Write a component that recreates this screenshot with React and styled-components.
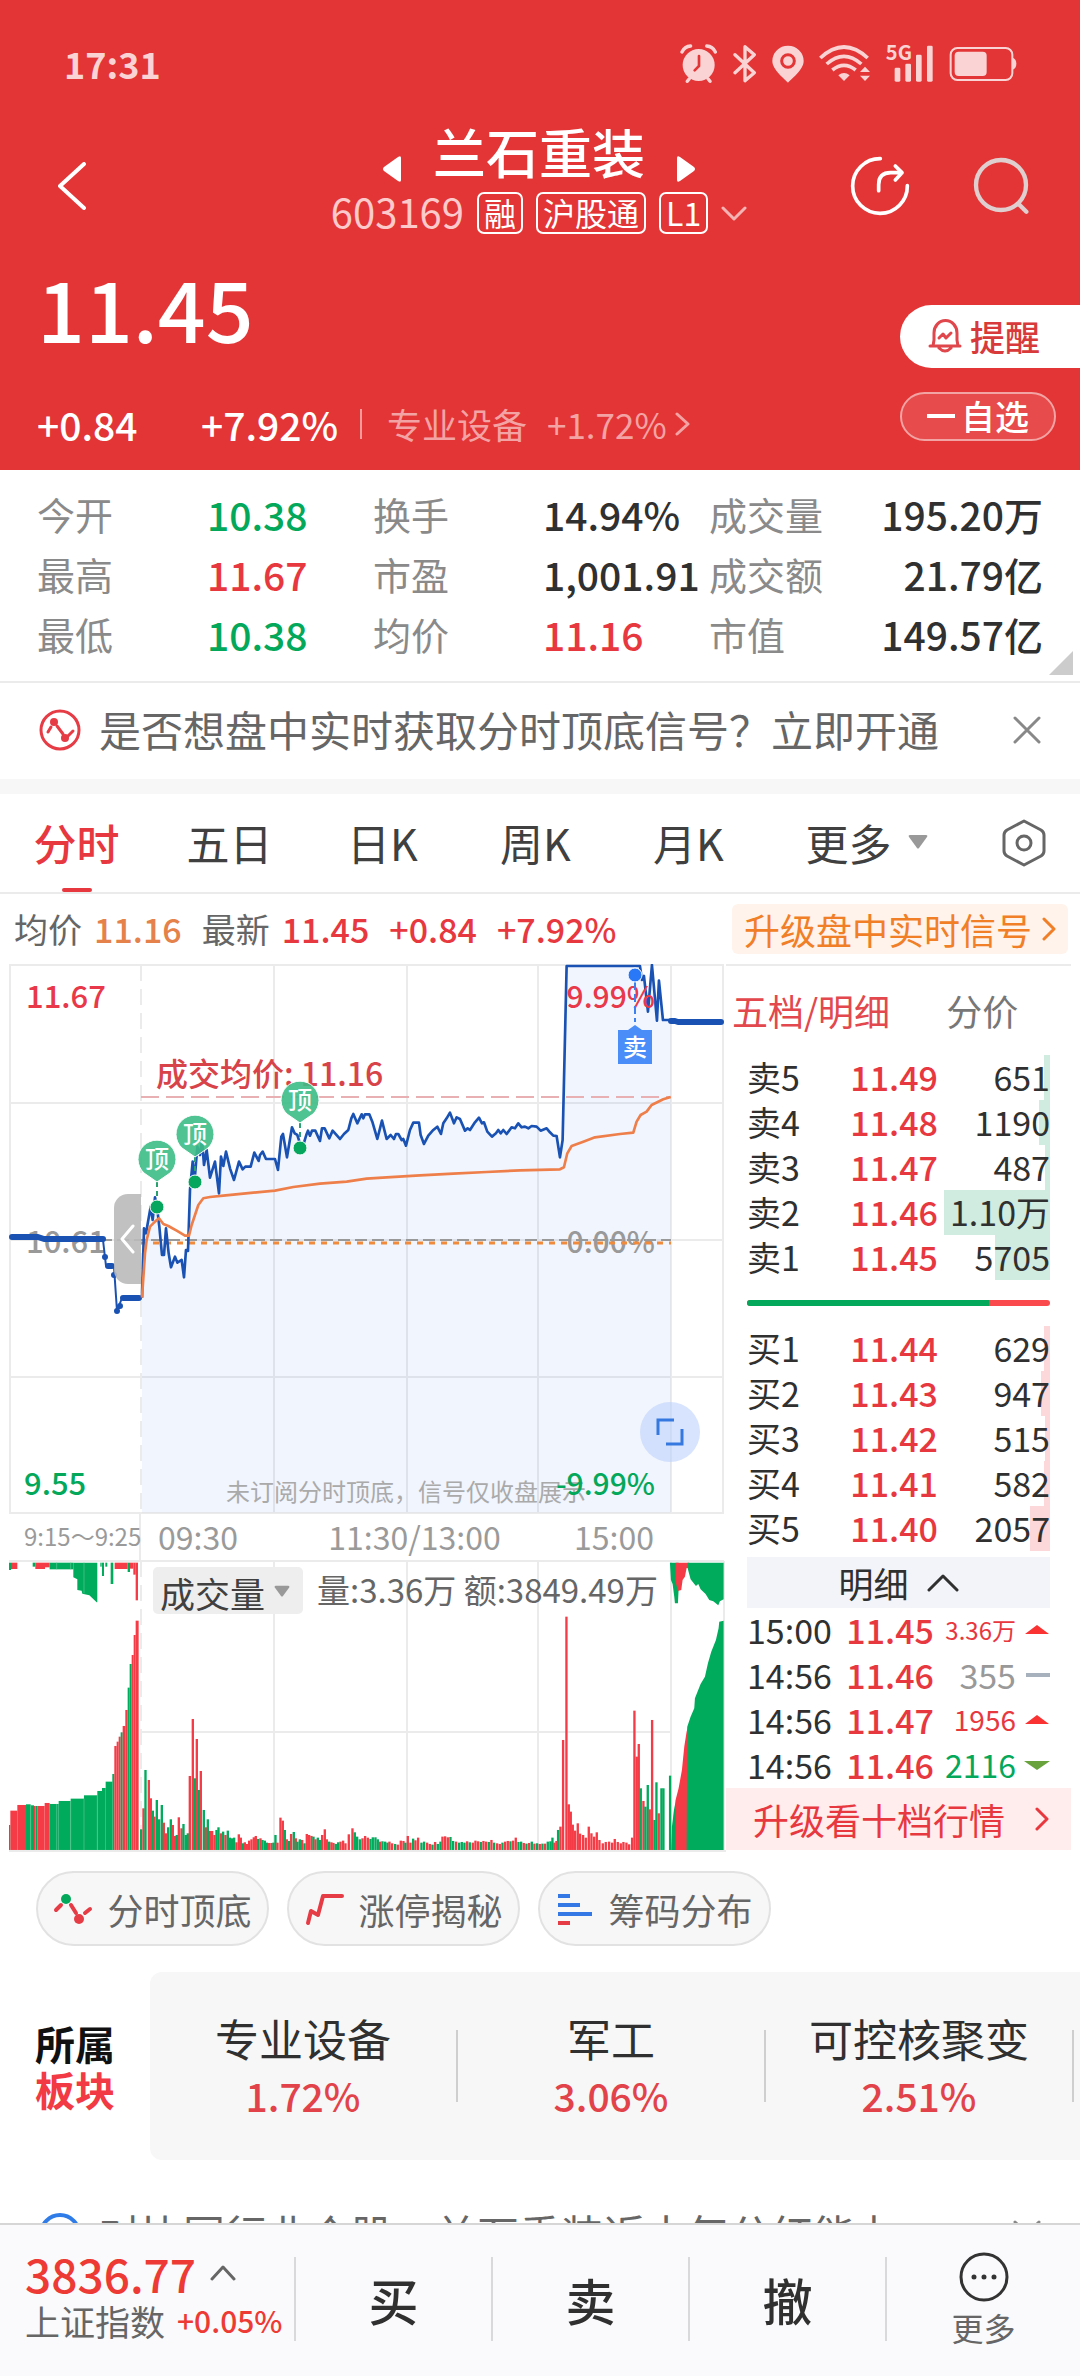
import React from "react";
import styled, { createGlobalStyle } from "styled-components";

const c = {
  brand: "#e33536",
  up: "#e8383f",
  down: "#04a85b",
  ink: "#303030",
  mid: "#666666",
  soft: "#8a8a8a",
  line: "#ebebeb",
  blue: "#1a52b3",
  orange: "#ee7f4a",
};

const tone = {
  up: c.up,
  down: c.down,
  ink: c.ink,
  soft: "#999999",
};

const GlobalStyle = createGlobalStyle`
  * { box-sizing: border-box; }
  body {
    margin: 0;
    background: #ffffff;
    color: ${c.ink};
    font-family: "Noto Sans CJK SC", "Noto Sans", sans-serif;
  }
  button, select { font-family: inherit; }
  svg { display: block; flex: none; }
`;

const Screen = styled.div`
  height: 100vh;
  display: flex;
  flex-direction: column;
`;

const Scroller = styled.main`
  flex: 1;
  min-height: 0;
  overflow-y: auto;
  scrollbar-width: none;
  &::-webkit-scrollbar { display: none; }
`;

const PlainButton = styled.button`
  display: flex;
  align-items: center;
  justify-content: center;
  padding: 0;
  border: 0;
  background: none;
  color: inherit;
  cursor: pointer;
`;

/* ---------- header ---------- */

const Hero = styled.header`
  background: ${c.brand};
  color: #ffffff;
  height: 470px;
  display: flex;
  flex-direction: column;
`;

const StatusBar = styled.div`
  height: 120px;
  padding: 8px 63px 0 64px;
  display: flex;
  align-items: center;
  justify-content: space-between;
  color: #fad4d4;
`;

const Clock = styled.span`
  font-size: 36px;
  line-height: 44px;
  font-weight: 700;
  padding-bottom: 2px;
`;

const StatusIcons = styled.div`
  display: flex;
  align-items: center;
  gap: 15px;
`;

const Signal = styled.div`
  display: flex;
  align-items: flex-start;
`;

const NetLabel = styled.span`
  font-size: 20px;
  line-height: 16px;
  height: 40px;
  font-weight: 700;
  margin-right: -18px;
`;

const NavBar = styled.div`
  display: grid;
  grid-template-columns: 1fr auto 1fr;
  height: 120px;
  padding: 0 48px 0 46px;
`;

const NavBack = styled(PlainButton)`
  justify-self: start;
  align-self: center;
  width: 52px;
  height: 60px;
  margin-top: 12px;
`;

const NavTools = styled.div`
  justify-self: end;
  display: flex;
  align-items: center;
  gap: 62px;
  padding-top: 12px;
`;

const TitleBlock = styled.div`
  display: flex;
  flex-direction: column;
  align-items: center;
`;

const TitleRow = styled.div`
  display: flex;
  align-items: flex-start;
  gap: 32px;
`;

const StockName = styled.h1`
  margin: 0;
  font-size: 53px;
  line-height: 62px;
  font-weight: 500;
`;

const StepButton = styled(PlainButton)`
  height: 98px;
`;

const CodeRow = styled.div`
  display: flex;
  align-items: center;
  gap: 13px;
  margin-top: -26px;
  height: 42px;
`;

const Code = styled.span`
  font-size: 40px;
  line-height: 38px;
  padding-bottom: 4px;
  color: #fccaca;
`;

const Tag = styled.span`
  border: 2px solid #ffffff;
  border-radius: 7px;
  height: 42px;
  padding: 0 5px;
  font-size: 32px;
  line-height: 36px;
  min-width: 45px;
  text-align: center;
`;

const PriceArea = styled.div`
  flex: 1;
  display: grid;
  grid-template-columns: 1fr auto;
`;

const PriceCol = styled.div`
  padding-left: 37px;
`;

const Price = styled.div`
  font-size: 84px;
  line-height: 100px;
  font-weight: 500;
  margin-top: 17px;
`;

const ChangeRow = styled.div`
  display: flex;
  align-items: center;
  margin-top: 40px;
  height: 54px;
`;

const Change = styled.span`
  font-size: 39px;
  line-height: 54px;
  font-weight: 500;
  width: ${(p) => p.$w}px;
`;

const Rule = styled.i`
  width: 2px;
  height: 30px;
  background: #f09a9a;
  margin: 0 25px 0 0;
`;

const IndustryLink = styled.a`
  display: flex;
  align-items: center;
  color: #f3a3a4;
  text-decoration: none;
  font-size: 35px;
  line-height: 54px;
  gap: 20px;
  & svg { margin-left: -12px; }
`;

const SideActions = styled.div`
  width: 180px;
  padding-top: 65px;
  display: flex;
  flex-direction: column;
  align-items: flex-start;
`;

const RemindButton = styled(PlainButton)`
  width: 180px;
  height: 63px;
  background: #ffffff;
  border-radius: 32px 0 0 32px;
  justify-content: flex-start;
  padding: 0 0 2px 28px;
  gap: 8px;
  color: #d83a3c;
  font-size: 35px;
  line-height: 50px;
  font-weight: 500;
`;

const WatchButton = styled(PlainButton)`
  width: 156px;
  height: 49px;
  margin-top: 24px;
  padding-bottom: 2px;
  border: 2px solid #f2a3a3;
  border-radius: 25px;
  background: #e74b4b;
  font-size: 34px;
  line-height: 40px;
  font-weight: 500;
  gap: 6px;
`;

/* ---------- stats ---------- */

const Stats = styled.dl`
  position: relative;
  margin: 0;
  padding: 14px 37px 17px;
  display: grid;
  grid-template-columns: 336fr 336fr 334fr;
  border-bottom: 2px solid ${c.line};
`;

const Stat = styled.div`
  display: flex;
  height: 60px;
  line-height: 60px;
  white-space: nowrap;
`;

const StatName = styled.dt`
  width: 170px;
  flex: none;
  font-size: 38px;
  color: ${c.soft};
`;

const StatValue = styled.dd`
  margin: 0;
  flex: 1;
  min-width: 0;
  font-size: 39px;
  font-weight: 500;
  color: ${(p) => tone[p.$tone]};
  display: ${(p) => (p.$end ? "flex" : "block")};
  justify-content: flex-end;
`;

const Corner = styled.i`
  position: absolute;
  right: 7px;
  bottom: 6px;
  border-left: 24px solid transparent;
  border-bottom: 24px solid #cccccc;
`;

/* ---------- notices ---------- */

const Notice = styled.div`
  height: 96px;
  padding: 0 39px 2px;
  display: flex;
  align-items: center;
  font-size: 42px;
  line-height: 60px;
  color: ${c.mid};
  white-space: nowrap;
`;

const NoticeLink = styled.a`
  flex: 1;
  margin-left: 18px;
  padding-bottom: 2px;
  color: inherit;
  text-decoration: none;
`;

const Band = styled.div`
  height: 15px;
  background: #f7f7f7;
`;

/* ---------- tabs ---------- */

const Tabs = styled.nav`
  display: grid;
  grid-template-columns: repeat(5, 153fr) 203fr 112fr;
  height: 100px;
  border-bottom: 2px solid ${c.line};
`;

const Tab = styled(PlainButton)`
  flex-direction: column;
  justify-content: flex-start;
  font-size: 43px;
  line-height: 64px;
  padding-top: 16px;
  font-weight: ${(p) => (p.$on ? 500 : 400)};
  color: ${(p) => (p.$on ? c.up : "#404040")};
  &::after {
    content: "";
    width: 30px;
    height: 4px;
    border-radius: 2px;
    margin-top: 14px;
    background: ${(p) => (p.$on ? c.up : "transparent")};
  }
`;

const MoreTab = styled(PlainButton)`
  gap: 16px;
  font-size: 43px;
  line-height: 64px;
  padding-bottom: 3px;
  color: #404040;
`;

/* ---------- quote line ---------- */

const QuoteLine = styled.div`
  display: flex;
  align-items: center;
  height: 70px;
  padding: 0 12px 0 14px;
  font-size: 34px;
  line-height: 50px;
  white-space: nowrap;
  color: ${c.mid};
`;

const QuoteItem = styled.span`
  color: ${(p) => p.$color || "inherit"};
  font-weight: ${(p) => (p.$color ? 500 : 400)};
  margin-right: ${(p) => (p.$wide ? 20 : 12)}px;
`;

const Upgrade = styled.a`
  margin-left: auto;
  height: 50px;
  display: flex;
  align-items: center;
  gap: 10px;
  padding: 0 12px;
  border-radius: 6px;
  background: #fff3eb;
  color: #f07f28;
  font-size: 36px;
  text-decoration: none;
`;

/* ---------- market panel ---------- */

const Market = styled.section`
  display: grid;
  grid-template-columns: 726fr 354fr;
  align-items: start;
`;

const ChartCol = styled.div`
  position: relative;
`;

const ChartSvg = styled.svg`
  width: 100%;
  height: auto;
`;

const PinText = styled.text`
  font-size: 24px;
  font-weight: 500;
  fill: #ffffff;
  text-anchor: middle;
`;

const ChartLabel = styled.text`
  font-size: ${(p) => p.$size || 31}px;
  font-weight: ${(p) => p.$weight || 500};
  fill: ${(p) => p.$fill};
  text-anchor: ${(p) => p.$anchor || "start"};
`;

const DrawerHandle = styled(PlainButton)`
  position: absolute;
  left: 114px;
  top: 230px;
  width: 27px;
  height: 90px;
  border-radius: 14px 0 0 14px;
  background: rgba(186, 186, 186, 0.9);
`;

const ExpandButton = styled(PlainButton)`
  position: absolute;
  right: 26px;
  top: 438px;
  width: 60px;
  height: 60px;
  border-radius: 30px;
  background: rgba(190, 210, 252, 0.6);
`;

const TimeAxis = styled.div`
  display: grid;
  grid-template-columns: 117px auto 1fr auto;
  height: 46px;
  padding: 0 72px 0 24px;
  line-height: 44px;
  color: #9a9a9a;
  white-space: nowrap;
`;

const AxisMark = styled.span`
  font-size: ${(p) => (p.$small ? 24 : 32)}px;
  padding-left: ${(p) => (p.$pad ? 17 : 0)}px;
  border-right: ${(p) => (p.$small ? `2px solid ${c.line}` : "0")};
  text-align: ${(p) => (p.$mid ? "center" : "left")};
`;

const VolumePanel = styled.div`
  position: relative;
`;

const VolumeHead = styled.div`
  position: absolute;
  left: 153px;
  top: 7px;
  height: 47px;
  display: flex;
  align-items: center;
  gap: 14px;
  font-size: 33px;
  line-height: 44px;
  color: ${c.mid};
  white-space: nowrap;
`;

const VolumeFigures = styled.span`
  padding-bottom: 3px;
`;

const IndicatorPicker = styled.label`
  position: relative;
  display: flex;
  align-items: center;
  & svg {
    position: absolute;
    right: 13px;
    pointer-events: none;
  }
`;

const IndicatorSelect = styled.select`
  appearance: none;
  border: 0;
  border-radius: 5px;
  background: #eeeeee;
  width: 150px;
  height: 47px;
  padding: 0 0 3px 7px;
  font-size: 35px;
  color: #404040;
`;

/* ---------- order book ---------- */

const Book = styled.aside`
  border-top: 2px solid ${c.line};
  margin-right: 9px;
`;

const BookTabs = styled.div`
  display: flex;
  gap: 56px;
  padding: 17px 0 0 6px;
  height: 89px;
`;

const BookTab = styled(PlainButton)`
  align-items: flex-start;
  font-size: 36px;
  line-height: 54px;
  color: ${(p) => (p.$on ? "#e2484d" : "#777777")};
`;

const BookTable = styled.table`
  border-collapse: collapse;
  table-layout: fixed;
  width: calc(100% - 42px);
  margin-left: 21px;
  font-size: 34px;
  line-height: 43px;
  white-space: nowrap;
  & td, & th { padding: 0 0 2px; height: 45px; }
`;

const Level = styled.th`
  width: 92px;
  padding-left: 2px;
  text-align: left;
  font-weight: 400;
`;

const LevelPrice = styled.td`
  width: 99px;
  text-align: right;
  color: ${c.up};
  font-weight: 500;
`;

const LevelVolume = styled.td`
  text-align: right;
  background: linear-gradient(${(p) => p.$tint}, ${(p) => p.$tint}) right / ${(p) => p.$w}px 100% no-repeat;
`;

const Balance = styled.div`
  display: flex;
  height: 6px;
  margin: 20px 21px;
  border-radius: 3px;
  overflow: hidden;
  background: #fb4a4d;
  &::before {
    content: "";
    width: 80%;
    background: ${c.down};
  }
`;

const DetailToggle = styled(PlainButton)`
  width: calc(100% - 42px);
  height: 51px;
  margin: 6px 21px 0;
  gap: 18px;
  background: #f2f4f9;
  font-size: 35px;
  line-height: 50px;
`;

const Tape = styled(BookTable)`
  & td:last-child { width: 34px; }
`;

const TapeTime = styled.th`
  width: 86px;
  text-align: left;
  font-weight: 400;
`;

const TapePrice = styled.td`
  width: 101px;
  text-align: right;
  color: ${c.up};
  font-weight: 500;
`;

const TapeVolume = styled.td`
  text-align: right;
  font-size: ${(p) => p.$size}px;
  color: ${(p) => tone[p.$tone]};
`;

const TapeIcon = styled.td`
  & svg { margin-left: auto; }
`;

const TenLevels = styled.a`
  display: flex;
  align-items: center;
  justify-content: space-between;
  height: 62px;
  padding: 0 22px 0 27px;
  background: #ffeced;
  color: ${c.up};
  font-size: 36px;
  text-decoration: none;
`;

/* ---------- chips ---------- */

const Chips = styled.div`
  display: flex;
  gap: 18px;
  padding: 19px 36px 26px;
`;

const Chip = styled(PlainButton)`
  width: 233px;
  height: 75px;
  border: 2px solid #e2e2e2;
  border-radius: 38px;
  background: #f7f7f7;
  color: ${c.mid};
  font-size: 36px;
  gap: 14px;
`;

/* ---------- sectors ---------- */

const Sectors = styled.section`
  display: grid;
  grid-template-columns: 150px 1fr;
  height: 188px;
`;

const SectorTitle = styled.h2`
  margin: 0;
  padding-left: 35px;
  align-self: center;
  font-size: 40px;
  line-height: 46px;
  font-weight: 700;
  color: #111111;
  & span { display: block; }
  & span + span { color: #f23a44; }
`;

const SectorStrip = styled.div`
  display: flex;
  align-items: center;
  overflow: hidden;
  border-radius: 12px 0 0 12px;
  background: #f7f7f7;
`;

const Sector = styled.a`
  flex: none;
  width: 308px;
  height: 72px;
  display: flex;
  flex-direction: column;
  align-items: center;
  justify-content: center;
  border-right: 2px solid #cfcfcf;
  color: ${c.ink};
  text-decoration: none;
  font-size: 44px;
  line-height: 58px;
`;

const SectorPct = styled.span`
  font-size: 39px;
  line-height: 56px;
  font-weight: 500;
  color: #e2434a;
`;

const NextNotice = styled.div`
  margin-top: 27px;
`;

/* ---------- footer ---------- */

const Footer = styled.footer`
  display: grid;
  grid-template-columns: 294fr 197fr 197fr 197fr 195fr;
  height: 153px;
  background: #fafafc;
  border-top: 2px solid #d6d6d6;
`;

const IndexCell = styled.div`
  padding: 22px 0 0 25px;
  white-space: nowrap;
`;

const IndexTop = styled.div`
  display: flex;
  align-items: center;
  gap: 14px;
  height: 52px;
  font-size: 46px;
  font-weight: 500;
  color: #ee3a34;
`;

const IndexBottom = styled.div`
  display: flex;
  align-items: center;
  gap: 12px;
  height: 42px;
  font-size: 35px;
  color: ${c.mid};
`;

const IndexPct = styled.span`
  font-size: 30px;
  font-weight: 500;
  color: #ee3a34;
`;

const Trade = styled(PlainButton)`
  height: 84px;
  margin-top: 32px;
  border-left: 2px solid #d9d9dc;
  font-size: 50px;
  font-weight: 500;
  color: ${c.ink};
`;

const FooterMore = styled(Trade)`
  flex-direction: column;
  gap: 4px;
  font-size: 32px;
  line-height: 40px;
  font-weight: 400;
  color: ${c.mid};
`;

/* ---------- icons ---------- */

const Chevron = ({ dir, w, h, color = "currentColor", sw = 3 }) => {
  const d = {
    left: `M${w - 2} 2L2 ${h / 2}L${w - 2} ${h - 2}`,
    right: `M2 2L${w - 2} ${h / 2}L2 ${h - 2}`,
    down: `M2 2L${w / 2} ${h - 2}L${w - 2} 2`,
    up: `M2 ${h - 2}L${w / 2} 2L${w - 2} ${h - 2}`,
  }[dir];
  return (
    <svg width={w} height={h} fill="none" stroke={color} strokeWidth={sw} strokeLinecap="round" strokeLinejoin="round" aria-hidden="true">
      <path d={d} />
    </svg>
  );
};

const Caret = ({ w = 20, h = 15, color = "#999999" }) => (
  <svg width={w} height={h} viewBox="0 0 20 15" aria-hidden="true">
    <path d="M2 1h16q2 0 1 2l-8 11q-1 1-2 0L1 3q-1-2 1-2z" fill={color} />
  </svg>
);

const AlarmIcon = () => (
  <svg width="38" height="40" viewBox="356 76 114 120" fill="#fad4d4">
    <circle cx="412" cy="139" r="48" />
    <path d="M362 100a30 30 0 0 1 26-18M462 100a30 30 0 0 0-26-18M384 180l-6 8M440 180l6 8" fill="none" stroke="#fad4d4" strokeWidth="10" strokeLinecap="round" />
    <path d="M413 112v30l-13 13" fill="none" stroke={c.brand} strokeWidth="8" strokeLinecap="round" />
  </svg>
);

const BluetoothIcon = () => (
  <svg width="24" height="40" viewBox="518 76 72 120" fill="none" stroke="#fad4d4" strokeWidth="10" strokeLinejoin="round" strokeLinecap="round">
    <path d="M524 108l58 54-28 24V84l28 24-58 54" />
  </svg>
);

const PinIcon = () => (
  <svg width="32" height="40" viewBox="636 76 96 120" fill="#fad4d4">
    <path d="M684 192c-8-10-47-38-47-65a47 46 0 0 1 94 0c0 27-39 55-47 65z" />
    <circle cx="684" cy="127" r="19" fill="none" stroke={c.brand} strokeWidth="9" />
  </svg>
);

const WifiIcon = () => (
  <svg width="52" height="40" viewBox="780 76 156 120" fill="none" stroke="#fad4d4" strokeWidth="11">
    <path d="M784 118q71-66 142 0M803 136q52-46 104 0M820 154q35-28 70 0" />
    <path d="M838 170q17-14 34 0l-17 17zM903 160l15-16 15 16zM903 171l15 16 15-16z" fill="#fad4d4" stroke="none" />
  </svg>
);

const BarsIcon = () => (
  <svg width="40" height="40" viewBox="1002 76 120 120" fill="#fad4d4">
    <rect x="1004" y="147" width="17" height="42" rx="4" />
    <rect x="1036" y="135" width="17" height="54" rx="4" />
    <rect x="1068" y="108" width="17" height="81" rx="4" />
    <rect x="1101" y="81" width="17" height="108" rx="4" />
  </svg>
);

const BatteryIcon = () => (
  <svg width="68" height="40" viewBox="1168 78 204 120">
    <rect x="1173" y="90" width="185" height="96" rx="20" fill="none" stroke="#fad4d4" strokeWidth="6" />
    <rect x="1185" y="101" width="96" height="73" rx="12" fill="#fad4d4" />
    <path d="M1358 119q12 3 12 18t-12 18z" fill="#fad4d4" />
  </svg>
);

const ShareIcon = () => (
  <svg width="60" height="60" viewBox="873 408 180 180" fill="none" stroke="#ffffff" strokeWidth="11" strokeLinecap="round" strokeLinejoin="round">
    <path d="M964 416a82 82 0 1 0 81 81M959 512v-18q0-36 36-36h34M1009 438l20 20-20 22" />
  </svg>
);

const SearchIcon = () => (
  <svg width="60" height="60" viewBox="1242 408 180 180" fill="none" stroke="#e0cfcf" strokeWidth="13" strokeLinecap="round">
    <circle cx="1329" cy="495" r="75" />
    <path d="M1381 551l24 24" />
  </svg>
);

const StepIcon = ({ flip }) => (
  <svg width="18" height="26" viewBox="0 0 18 26" fill="#ffffff">
    <path d={flip ? "M0 2q0-3 3-1l14 10q2 2 0 4L3 25q-3 2-3-1z" : "M18 2q0-3-3-1L1 11q-2 2 0 4l14 10q3 2 3-1z"} />
  </svg>
);

const BellIcon = () => (
  <svg width="34" height="36" viewBox="0 0 34 36" fill="none" stroke="#e0474c" strokeWidth="3" strokeLinejoin="round" strokeLinecap="round">
    <path d="M2 28h30M5 28l1-6v-7a11 12 0 0 1 23 0v7l1 6M11 30q6 6 12 0" />
    <path d="M11 20l4-4 3 4 5-5" />
  </svg>
);

const WaveIcon = () => (
  <svg width="42" height="44" viewBox="0 0 42 44" fill="none" stroke="#e63c46" strokeLinecap="round">
    <circle cx="21" cy="22" r="19" strokeWidth="3" />
    <path d="M9 24l3-5M18 18l6 8M29 28l5-5" strokeWidth="3" />
    <circle cx="15" cy="14" r="4" fill="#e63c46" stroke="none" />
    <circle cx="26" cy="30" r="4" fill="#e63c46" stroke="none" />
  </svg>
);

const CloseIcon = () => (
  <svg width="28" height="28" viewBox="0 0 28 28" stroke="#888888" strokeWidth="3" strokeLinecap="round">
    <path d="M2 2l24 24M26 2L2 26" />
  </svg>
);

const HexIcon = () => (
  <svg width="44" height="48" viewBox="0 0 44 48" fill="none" stroke="#666666" strokeWidth="3" strokeLinejoin="round">
    <path d="M22 2l17 9q3 2 3 5v16q0 3-3 5l-17 9-17-9q-3-2-3-5V16q0-3 3-5z" />
    <circle cx="22" cy="24" r="7" />
  </svg>
);

const TopBottomIcon = () => (
  <svg width="40" height="34" viewBox="0 0 40 34" fill="none" stroke="#e63c46" strokeWidth="4" strokeLinecap="round">
    <path d="M3 18l5-5M18 13l5 8M32 21l5-4" />
    <circle cx="13" cy="7" r="5" fill={c.down} stroke="none" />
    <circle cx="26" cy="27" r="5" fill="#e63c46" stroke="none" />
  </svg>
);

const LimitIcon = () => (
  <svg width="40" height="34" viewBox="0 0 40 34" fill="none" stroke="#e63c46" strokeWidth="4" strokeLinecap="round" strokeLinejoin="round">
    <path d="M4 31l3-12 7 4 5-19h19" />
  </svg>
);

const ChipsIcon = () => (
  <svg width="38" height="34" viewBox="0 0 38 34" strokeWidth="4">
    <path d="M2 4h12M2 13h22M2 22h34" stroke="#3478e5" />
    <path d="M2 31h12" stroke="#e63c46" />
  </svg>
);

const TapeMark = ({ kind }) => (
  <svg width="26" height="12" viewBox="0 0 26 12" aria-hidden="true">
    {kind === "up" && <path d="M13 1l12 9H1z" fill="#fb3232" />}
    {kind === "down" && <path d="M13 11L0 2h26z" fill="#68a33c" />}
    {kind === "flat" && <path d="M2 4h24v4H2z" fill="#a7b1bd" />}
  </svg>
);

const MoreIcon = () => (
  <svg width="52" height="52" viewBox="0 0 52 52">
    <circle cx="26" cy="26" r="23" fill="none" stroke="#333333" strokeWidth="3" />
    <path d="M16 26h0M26 26h0M36 26h0" stroke="#333333" strokeWidth="5" strokeLinecap="round" />
  </svg>
);

/* ---------- chart data ---------- */

// Session traces are recorded on a 3x grid; the group transform maps them to the plot.
const pricePoints =
  "66,1013 72,805 78,820 92,740 98,780 105,712 111,741 118,800 126,885 132,885 138,805 146,880 153,922 165,890 172,908 185,900 192,952 198,870 204,873 210,690 218,605 224,660 232,560 240,585 246,540 252,615 260,570 270,653 285,605 297,700 303,590 310,618 318,575 330,625 342,660 357,605 368,628 376,620 392,620 403,578 416,603 420,585 428,575 438,597 465,597 474,630 484,530 489,522 501,592 516,502 524,520 532,525 540,550 550,555 560,522 564,512 570,527 576,512 586,512 600,543 606,505 614,505 628,535 638,512 660,537 672,522 685,510 694,475 700,462 712,490 725,463 730,475 735,463 748,463 757,485 772,537 786,482 800,537 812,525 822,537 828,522 835,522 845,540 850,537 858,557 870,510 880,488 897,488 902,525 912,552 925,527 940,510 952,500 963,522 970,490 980,475 990,458 1002,490 1010,472 1020,477 1035,512 1043,505 1050,510 1065,487 1077,473 1086,490 1092,487 1102,515 1116,530 1128,520 1135,510 1142,520 1150,510 1160,522 1175,502 1185,505 1195,490 1205,502 1215,500 1225,505 1235,498 1250,500 1262,512 1280,505 1290,517 1300,527 1310,528 1320,592 1328,540 1340,18 1560,18 1566,60 1572,48 1584,155 1596,15 1611,182 1617,62 1629,180 1652,180";

const averagePoints =
  "66,1013 75,880 80,840 90,800 105,785 117,775 130,792 145,798 170,812 195,827 207,827 215,795 225,765 235,735 250,715 270,711 310,707 400,698 465,692 520,681 600,671 680,665 740,656 800,652 900,646 1000,641 1100,636 1200,631 1320,628 1332,622 1342,580 1355,558 1390,545 1425,532 1500,522 1540,518 1550,485 1562,465 1580,455 1595,435 1630,418 1652,411";

const pins = [
  { x: 157, y: 1159, dot: 1207 },
  { x: 195, y: 1134, dot: 1182 },
  { x: 300, y: 1100, dot: 1148 },
];

const morningBars =
  "424:868g 431:805r 437:690g 447:720r 453:775r 459:812g 464:830r 471:780g 478:838g 486:795g 492:848r 498:880r 505:862g 513:838g 519:855r 525:888r 531:885g 537:832r 545:865r 551:852g 558:885g 564:880g 570:708r 579:537r 585:715g 591:597r 597:750g 603:693r 612:810g 618:862r 624:838g 631:873r 637:873r 644:885r 650:870g 656:862g 663:880r 670:875g 677:885r 684:872g 690:893g 697:895g 703:893g 710:907r 717:883r 723:893r 729:910g 735:907r 741:912r 748:902r 755:898r 762:892r 768:888r 775:897g 782:895r 788:900g 795:902g 801:908g 808:909r 815:909r 821:908g 827:885g 833:908r 842:833r 849:842r 855:870g 861:898r 868:903g 874:882r 882:876g 888:895r 893:905g 900:898g 907:900r 914:910g 921:882r 928:885r 935:888r 941:890g 947:898r 954:893g 960:900g 967:885r 975:868r 981:898r 988:905g 995:907r 1001:909r 1008:912g 1015:907g 1022:905r 1030:902r 1037:910r 1047:883r 1058:865r 1065:877g 1072:890g";

const afternoonBars =
  "1080:898g 1088:895r 1096:888r 1104:893r 1112:897g 1119:892g 1127:892g 1134:898g 1141:905r 1148:904g 1156:905g 1163:908g 1169:905r 1177:910r 1186:912g 1194:914r 1203:902r 1211:903r 1217:908g 1224:888r 1232:908r 1240:896g 1247:901r 1255:893r 1265:908g 1273:905g 1282:908r 1290:912r 1298:914g 1306:906r 1314:912g 1322:905g 1328:890r 1336:889r 1344:892r 1352:891g 1360:903g 1369:905r 1378:908g 1386:906g 1394:908g 1402:904r 1410:907g 1419:908r 1427:902r 1435:904r 1443:906g 1451:903r 1459:905r 1467:906g 1475:900r 1483:908g 1492:910r 1500:912r 1508:908g 1516:905r 1524:903r 1532:904g 1540:902r 1548:893r 1556:906g 1564:905g 1572:909r 1580:911g 1588:909r 1596:905g 1604:911r 1612:910g 1620:912r 1628:911g 1636:911r 1644:905g 1652:904g 1658:893g 1664:908r 1670:903r 1675:870g 1682:860r 1690:600r 1700:230r 1707:793r 1713:815r 1719:854r 1726:872r 1734:850r 1741:881r 1750:885r 1758:893r 1767:860r 1775:880r 1783:890r 1791:877r 1799:900r 1809:910r 1818:906r 1828:905r 1837:908r 1845:897r 1854:906r 1863:910r 1871:906r 1880:908r 1888:913r 1897:893r 1904:512r 1911:650r 1917:612r 1923:745g 1931:783r 1937:800g 1944:735g 1950:808r 1957:540r 1964:840g 1970:727g 1977:820r 1985:745g 1991:745g 2011:707g";

const parseBars = (src) =>
  src.split(" ").map((s) => {
    const [x, rest] = s.split(":");
    return { x: +x, y: parseInt(rest, 10), fill: rest.endsWith("r") ? "#f53c46" : "#00ab5c" };
  });

// Call-auction columns: [left, right, top, colour]
const auction = [
  [27, 31, 855, "g"], [31, 52, 812, "r"], [52, 78, 795, "r"], [78, 92, 793, "g"], [92, 102, 796, "g"],
  [102, 106, 798, "r"], [106, 112, 798, "g"], [112, 134, 798, "r"], [134, 149, 789, "r"], [149, 176, 792, "g"], [176, 212, 783, "g"],
  [212, 252, 776, "g"], [252, 292, 766, "g"], [292, 306, 753, "g"], [306, 317, 744, "g"],
  [317, 337, 725, "g"], [337, 343, 702, "g"], [343, 350, 618, "r"], [350, 356, 605, "r"],
  [356, 362, 590, "r"], [362, 368, 577, "g"], [368, 376, 558, "r"], [376, 383, 510, "r"],
  [383, 389, 443, "g"], [389, 395, 372, "g"], [395, 401, 345, "r"], [401, 407, 285, "r"], [407, 416, 242, "r"],
];

const hanging = [
  [27, 33, 90, "g"], [33, 52, 87, "r"], [98, 106, 80, "g"], [106, 135, 87, "r"], [135, 149, 82, "r"], [149, 220, 88, "g"],
  [301, 305, 80, "g"], [306, 312, 108, "g"], [316, 322, 80, "g"], [332, 340, 132, "g"], [344, 383, 87, "r"],
  [383, 390, 96, "g"], [390, 400, 86, "r"], [400, 407, 104, "r"], [407, 414, 181, "r"],
];

const colour = { r: "#f53c46", g: "#00ab5c" };

function PriceChart() {
  return (
    <ChartSvg viewBox="0 964 726 550" role="img" aria-label="分时走势">
      <g stroke={c.line} strokeWidth="2" fill="none">
        <path d="M9 965H724M9 1103H724M9 1240H724M9 1377H724M9 1513H724M10 965V1513M274 965V1513M407 965V1513M538 965V1513M671 965V1513M723 965V1513" />
        <path d="M141 965V1513" strokeDasharray="16 8" />
      </g>
      <g transform="translate(120 960) scale(0.3333)">
        <polygon points={`${pricePoints} 1652,1658 66,1658`} fill="#4a80f0" fillOpacity="0.08" />
      </g>
      <ChartLabel x="26" y="1008" $fill="#e8384a">11.67</ChartLabel>
      <ChartLabel x="26" y="1253" $fill="#999999">10.61</ChartLabel>
      <ChartLabel x="24" y="1495" $fill={c.down}>9.55</ChartLabel>
      <ChartLabel x="655" y="1253" $size="30" $fill="#999999" $anchor="end">0.00%</ChartLabel>
      <ChartLabel x="156" y="1086" $size="32" $fill="#d8434a">成交均价: 11.16</ChartLabel>
      <path d="M141 1097H671" stroke="#e9b0b4" strokeWidth="2" strokeDasharray="18 7" />
      <path d="M100 1240H671" stroke="#999999" strokeWidth="2" strokeDasharray="12 5" />
      <path d="M141 1243H671" stroke="#f08a3c" strokeWidth="3" strokeDasharray="6 6" />
      <g fill="none" stroke={c.blue} strokeLinejoin="round">
        <path d="M12 1237H38L44 1239H103" strokeWidth="6" strokeLinecap="round" />
        <path d="M103 1240L106 1266L114 1267L117 1311L122 1298" strokeWidth="2" />
        <path d="M105 1257h0M108 1266h4M114 1275h0M117 1311h0M120 1306h0M123 1298h16" strokeWidth="6" strokeLinecap="round" />
        <path d="M671 1021h4l3 1H721" strokeWidth="6" strokeLinecap="round" />
      </g>
      <g transform="translate(120 960) scale(0.3333)" fill="none" strokeLinejoin="round">
        <polyline points={pricePoints} stroke={c.blue} strokeWidth="8" />
        <polyline points={averagePoints} stroke={c.orange} strokeWidth="8" />
      </g>
      <ChartLabel x="655" y="1008" $size="30" $fill="#e8384a" $anchor="end">9.99%</ChartLabel>
      <ChartLabel x="586" y="1501" $size="24" $weight="400" $fill="#aaaaaa" $anchor="end">未订阅分时顶底，信号仅收盘展示</ChartLabel>
      <ChartLabel x="655" y="1495" $size="30" $fill={c.down} $anchor="end">-9.99%</ChartLabel>
      {pins.map((p) => (
        <g key={p.x}>
          <path d={`M${p.x} ${p.y + 23}V${p.dot}`} stroke="#2aa06f" strokeWidth="2" strokeDasharray="5 4" />
          <path
            d={`M${p.x} ${p.y + 23}L${p.x - 13} ${p.y + 14}A19 19 0 1 1 ${p.x + 13} ${p.y + 14}Z`}
            fill="#3dbd86" fillOpacity="0.9" stroke="#ffffff" strokeWidth="1"
          />
          <PinText x={p.x} y={p.y + 9}>顶</PinText>
          <circle cx={p.x} cy={p.dot} r="7" fill="#06a65f" stroke="#ffffff" strokeWidth="1" />
        </g>
      ))}
      <path d="M635 982V1022" stroke="#3c80f0" strokeWidth="2" strokeDasharray="8 4" />
      <circle cx="635" cy="975" r="7" fill="#2878f8" stroke="#ffffff" strokeWidth="1" />
      <path d="M618 1030h10l7-5 7 5h10v34h-34z" fill="#4a8cf8" />
      <PinText x="635" y="1056">卖</PinText>
    </ChartSvg>
  );
}

function VolumeChart() {
  return (
    <ChartSvg viewBox="0 1560 726 292" role="img" aria-label="成交量柱状图">
      <g stroke={c.line} strokeWidth="2" fill="none">
        <path d="M9 1561H724M141 1732H671M9 1851H726M274 1561V1850M407 1561V1850M538 1561V1850M671 1561V1850M724 1561V1850" />
        <path d="M141 1561V1850" strokeDasharray="16 8" />
      </g>
      <g transform="translate(0 1540) scale(0.3333)">
        {auction.map(([l, r, top, k]) => (
          <rect key={l} x={l} y={top} width={r - l} height={930 - top} fill={colour[k]} />
        ))}
        {hanging.map(([l, r, end, k]) => (
          <rect key={l} x={l} y="68" width={r - l} height={end - 68} fill={colour[k]} />
        ))}
        <polygon points="220,68 220,112 232,118 232,150 245,152 247,161 268,166 290,187 292,187 292,68" fill={colour.g} />
        <path d="M92 796V930M170 792V930M212 783V930M252 776V930M292 766V930M170 68V88M212 68V88M252 68V160" stroke="#5fc795" strokeWidth="2" />
        {[...parseBars(morningBars), ...parseBars(afternoonBars)].map((b) => (
          <rect key={b.x} x={b.x - 4} y={b.y} width="7" height={930 - b.y} fill={b.fill} />
        ))}
        <polygon points="2014,930 2016,860 2022,810 2030,770 2034,930" fill={colour.g} />
        <polygon points="2027,930 2027,780 2036,745 2046,690 2053,620 2060,575 2064,560 2064,930" fill={colour.r} />
        <polygon points="2060,930 2062,560 2072,530 2083,505 2085,475 2102,432 2115,410 2124,370 2134,335 2148,300 2156,265 2158,245 2171,242 2171,930" fill={colour.g} />
        <polygon points="2010,68 2013,120 2018,132 2023,170 2025,190 2034,190 2036,150 2036,68" fill={colour.g} />
        <polygon points="2027,68 2027,125 2034,153 2044,150 2048,120 2055,110 2060,84 2068,84 2068,68" fill={colour.r} />
        <polygon points="2063,68 2063,84 2072,118 2088,138 2095,132 2102,148 2117,162 2128,180 2140,184 2155,196 2160,184 2171,178 2171,68" fill={colour.g} />
      </g>
    </ChartSvg>
  );
}

const stats = [
  ["今开", "10.38", "down"], ["换手", "14.94%", "ink"], ["成交量", "195.20万", "ink"],
  ["最高", "11.67", "up"], ["市盈", "1,001.91", "ink"], ["成交额", "21.79亿", "ink"],
  ["最低", "10.38", "down"], ["均价", "11.16", "up"], ["市值", "149.57亿", "ink"],
];

const asks = [
  ["卖5", "11.49", "651", 6], ["卖4", "11.48", "1190", 11], ["卖3", "11.47", "487", 5],
  ["卖2", "11.46", "1.10万", 106], ["卖1", "11.45", "5705", 55],
];

const bids = [
  ["买1", "11.44", "629", 6], ["买2", "11.43", "947", 9], ["买3", "11.42", "515", 5],
  ["买4", "11.41", "582", 6], ["买5", "11.40", "2057", 20],
];

const ticks = [
  ["15:00", "11.45", "3.36万", "up", "up", 24],
  ["14:56", "11.46", "355", "soft", "flat", 34],
  ["14:56", "11.47", "1956", "up", "up", 28],
  ["14:56", "11.46", "2116", "down", "down", 32],
];

const Levels = ({ rows, tint }) => (
  <BookTable>
    <tbody>
      {rows.map(([name, price, vol, w]) => (
        <tr key={name}>
          <Level scope="row">{name}</Level>
          <LevelPrice>{price}</LevelPrice>
          <LevelVolume $tint={tint} $w={w}>{vol}</LevelVolume>
        </tr>
      ))}
    </tbody>
  </BookTable>
);

export default function App() {
  return (
    <Screen>
      <GlobalStyle />
      <Scroller>
        <Hero>
          <StatusBar>
            <Clock>17:31</Clock>
            <StatusIcons>
              <AlarmIcon />
              <BluetoothIcon />
              <PinIcon />
              <WifiIcon />
              <Signal>
                <NetLabel>5G</NetLabel>
                <BarsIcon />
              </Signal>
              <BatteryIcon />
            </StatusIcons>
          </StatusBar>
          <NavBar>
            <NavBack aria-label="返回"><Chevron dir="left" w={28} h={48} sw={4} /></NavBack>
            <TitleBlock>
              <TitleRow>
                <StepButton aria-label="上一只"><StepIcon /></StepButton>
                <StockName>兰石重装</StockName>
                <StepButton aria-label="下一只"><StepIcon flip /></StepButton>
              </TitleRow>
              <CodeRow>
                <Code>603169</Code>
                <Tag>融</Tag>
                <Tag>沪股通</Tag>
                <Tag>L1</Tag>
                <Chevron dir="down" w={26} h={15} color="#f5b3b3" />
              </CodeRow>
            </TitleBlock>
            <NavTools>
              <PlainButton aria-label="分享"><ShareIcon /></PlainButton>
              <PlainButton aria-label="搜索"><SearchIcon /></PlainButton>
            </NavTools>
          </NavBar>
          <PriceArea>
            <PriceCol>
              <Price>11.45</Price>
              <ChangeRow>
                <Change $w={164}>+0.84</Change>
                <Change $w={159}>+7.92%</Change>
                <Rule />
                <IndustryLink href="#industry">
                  <span>专业设备</span>
                  <span>+1.72%</span>
                  <Chevron dir="right" w={15} h={24} />
                </IndustryLink>
              </ChangeRow>
            </PriceCol>
            <SideActions>
              <RemindButton><BellIcon />提醒</RemindButton>
              <WatchButton>
                <svg width="28" height="4"><path d="M0 2h28" stroke="#ffffff" strokeWidth="4" /></svg>
                自选
              </WatchButton>
            </SideActions>
          </PriceArea>
        </Hero>

        <Stats>
          {stats.map(([name, value, t], i) => (
            <Stat key={name}>
              <StatName>{name}</StatName>
              <StatValue $tone={t} $end={i % 3 === 2}>{value}</StatValue>
            </Stat>
          ))}
          <Corner />
        </Stats>

        <Notice>
          <WaveIcon />
          <NoticeLink href="#signal">是否想盘中实时获取分时顶底信号？立即开通</NoticeLink>
          <PlainButton aria-label="关闭"><CloseIcon /></PlainButton>
        </Notice>
        <Band />

        <Tabs>
          {["分时", "五日", "日K", "周K", "月K"].map((t, i) => (
            <Tab key={t} $on={i === 0}>{t}</Tab>
          ))}
          <MoreTab>更多<Caret /></MoreTab>
          <PlainButton aria-label="设置"><HexIcon /></PlainButton>
        </Tabs>

        <QuoteLine>
          <QuoteItem>均价</QuoteItem>
          <QuoteItem $color="#e5814a" $wide>11.16</QuoteItem>
          <QuoteItem>最新</QuoteItem>
          <QuoteItem $color={c.up} $wide>11.45</QuoteItem>
          <QuoteItem $color={c.up} $wide>+0.84</QuoteItem>
          <QuoteItem $color={c.up}>+7.92%</QuoteItem>
          <Upgrade href="#upgrade">升级盘中实时信号<Chevron dir="right" w={14} h={24} /></Upgrade>
        </QuoteLine>

        <Market>
          <ChartCol>
            <PriceChart />
            <DrawerHandle aria-label="收起集合竞价"><Chevron dir="left" w={15} h={30} color="#ffffff" /></DrawerHandle>
            <ExpandButton aria-label="全屏">
              <svg width="28" height="28" fill="none" stroke="#3478e0" strokeWidth="3"><path d="M2 17V2h16M26 11v15H10" /></svg>
            </ExpandButton>
            <TimeAxis>
              <AxisMark $small>9:15～9:25</AxisMark>
              <AxisMark $pad>09:30</AxisMark>
              <AxisMark $pad $mid>11:30/13:00</AxisMark>
              <AxisMark>15:00</AxisMark>
            </TimeAxis>
            <VolumePanel>
              <VolumeChart />
              <VolumeHead>
                <IndicatorPicker aria-label="指标">
                  <IndicatorSelect defaultValue="vol">
                    <option value="vol">成交量</option>
                  </IndicatorSelect>
                  <Caret w={16} h={12} />
                </IndicatorPicker>
                <VolumeFigures>量:3.36万 额:3849.49万</VolumeFigures>
              </VolumeHead>
            </VolumePanel>
          </ChartCol>

          <Book>
            <BookTabs>
              <BookTab $on>五档/明细</BookTab>
              <BookTab>分价</BookTab>
            </BookTabs>
            <Levels rows={asks} tint="#d0ebdf" />
            <Balance />
            <Levels rows={bids} tint="#fdd8da" />
            <DetailToggle>明细<Chevron dir="up" w={32} h={18} /></DetailToggle>
            <Tape>
              <tbody>
                {ticks.map(([time, price, vol, t, mark, size], i) => (
                  <tr key={i}>
                    <TapeTime scope="row">{time}</TapeTime>
                    <TapePrice>{price}</TapePrice>
                    <TapeVolume $tone={t} $size={size}>{vol}</TapeVolume>
                    <TapeIcon><TapeMark kind={mark} /></TapeIcon>
                  </tr>
                ))}
              </tbody>
            </Tape>
            <TenLevels href="#ten">升级看十档行情<Chevron dir="right" w={14} h={24} /></TenLevels>
          </Book>
        </Market>

        <Chips>
          <Chip><TopBottomIcon />分时顶底</Chip>
          <Chip><LimitIcon />涨停揭秘</Chip>
          <Chip><ChipsIcon />筹码分布</Chip>
        </Chips>

        <Sectors>
          <SectorTitle><span>所属</span><span>板块</span></SectorTitle>
          <SectorStrip>
            <Sector href="#s1">专业设备<SectorPct>1.72%</SectorPct></Sector>
            <Sector href="#s2">军工<SectorPct>3.06%</SectorPct></Sector>
            <Sector href="#s3">可控核聚变<SectorPct>2.51%</SectorPct></Sector>
          </SectorStrip>
        </Sectors>

        <NextNotice>
          <Notice>
            <svg width="42" height="44" viewBox="0 0 42 44"><circle cx="21" cy="22" r="19" fill="none" stroke="#2f7be8" strokeWidth="4" /></svg>
            <NoticeLink href="#compare">对比同行业个股，兰石重装近十年分红能力</NoticeLink>
            <PlainButton aria-label="关闭"><CloseIcon /></PlainButton>
          </Notice>
        </NextNotice>
      </Scroller>

      <Footer>
        <IndexCell>
          <IndexTop>3836.77<Chevron dir="up" w={26} h={16} color="#666666" /></IndexTop>
          <IndexBottom>上证指数<IndexPct>+0.05%</IndexPct></IndexBottom>
        </IndexCell>
        <Trade>买</Trade>
        <Trade>卖</Trade>
        <Trade>撤</Trade>
        <FooterMore><MoreIcon />更多</FooterMore>
      </Footer>
    </Screen>
  );
}
